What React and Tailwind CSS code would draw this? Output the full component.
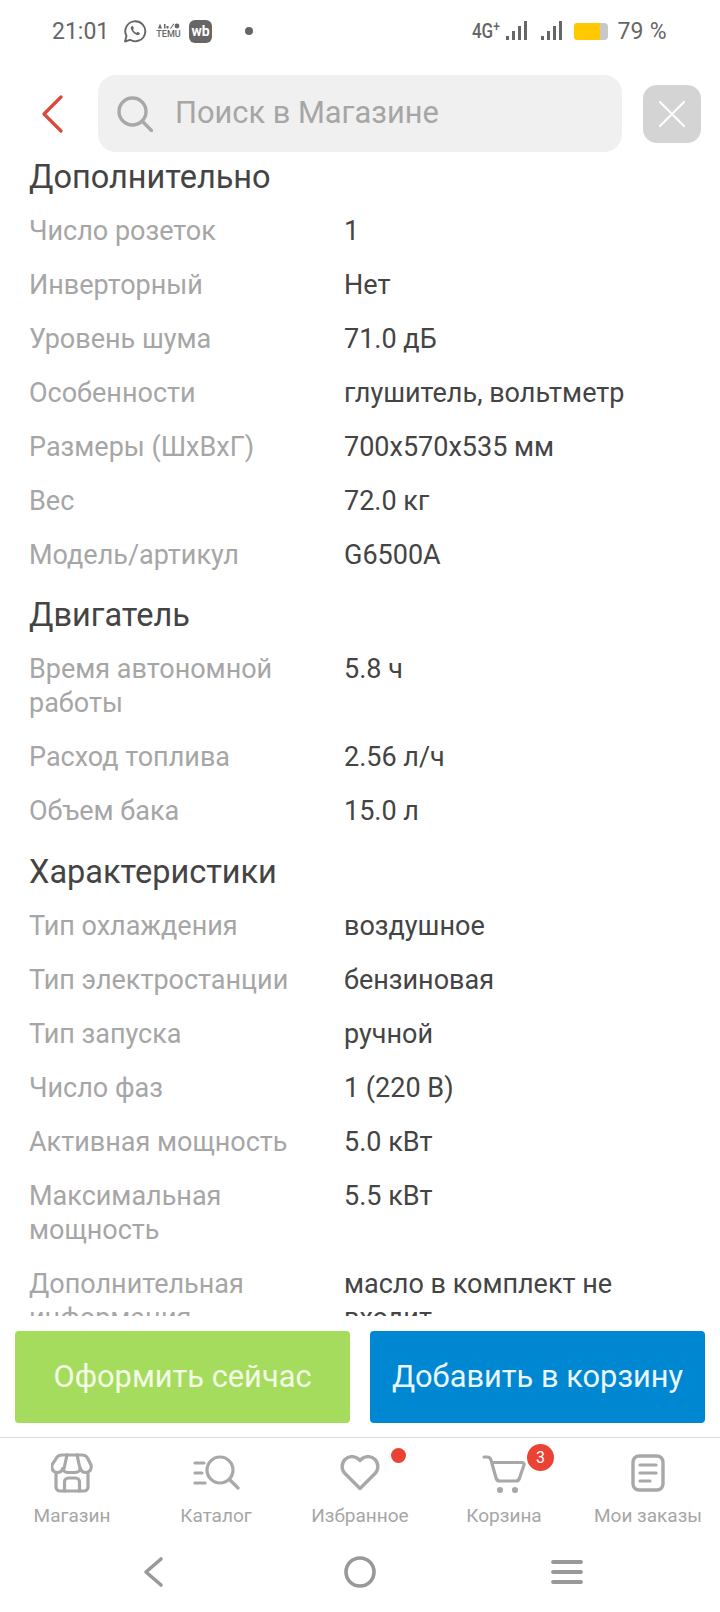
import React from "react";

const sections = [
  {
    title: "Дополнительно",
    gap: "pt-[7px]",
    rows: [
      ["Число розеток", "1"],
      ["Инверторный", "Нет"],
      ["Уровень шума", "71.0 дБ"],
      ["Особенности", "глушитель, вольтметр"],
      ["Размеры (ШхВхГ)", "700x570x535 мм"],
      ["Вес", "72.0 кг"],
      ["Модель/артикул", "G6500A"],
    ],
  },
  {
    title: "Двигатель",
    gap: "pt-[6px]",
    rows: [
      ["Время автономной работы", "5.8 ч"],
      ["Расход топлива", "2.56 л/ч"],
      ["Объем бака", "15.0 л"],
    ],
  },
  {
    title: "Характеристики",
    gap: "pt-[7px]",
    rows: [
      ["Тип охлаждения", "воздушное"],
      ["Тип электростанции", "бензиновая"],
      ["Тип запуска", "ручной"],
      ["Число фаз", "1 (220 В)"],
      ["Активная мощность", "5.0 кВт"],
      ["Максимальная мощность", "5.5 кВт"],
      ["Дополнительная информация", "масло в комплект не входит"],
    ],
  },
];

const Signal = () => (
  <svg width="22" height="20" viewBox="0 0 22 20" fill="#666">
    <rect x="0" y="15" width="3" height="4" />
    <rect x="6" y="10" width="3" height="9" />
    <rect x="12" y="5" width="3" height="14" />
    <rect x="18" y="0" width="3" height="19" />
  </svg>
);

const StatusBar = () => (
  <div className="flex h-[60px] shrink-0 items-center pt-[2px] text-[#666]">
    <span className="ml-[52px] w-[66px] text-[23px] leading-none">21:01</span>
    <svg className="ml-[5px]" width="24" height="24" viewBox="0 0 24 24" fill="none">
      <path d="M2 22.5l1.5-5.4A10 10 0 1 1 7 20.8L2 22.5z" stroke="#666" strokeWidth="1.9" strokeLinejoin="round" />
      <path d="M8.8 7.2c-.9.6-1.2 1.7-.7 3 .9 2.5 3.2 4.8 5.7 5.7 1.3.4 2.4.1 3-.8.3-.5.2-.9-.2-1.2l-1.6-.9c-.4-.2-.7-.1-1 .2l-.6.7c-1.4-.5-2.8-1.9-3.4-3.4l.6-.6c.3-.3.3-.6.2-1l-.8-1.6c-.3-.4-.7-.4-1.2-.1z" fill="#666" />
    </svg>
    <div className="ml-[10px] flex w-[23px] flex-col items-center">
      <svg width="23" height="6" viewBox="0 0 23 6" fill="#666">
        <path d="M1 5.5L3 .5l2 5z" />
        <rect x="7" y="1" width="1.5" height="4.5" />
        <rect x="9.5" y="3" width="2" height="2.5" />
        <path d="M13 5.5l3.5-5 .8.5-3.5 5z" />
        <circle cx="20" cy="3" r="2.4" />
      </svg>
      <span className="mt-[1px] text-[9px] font-medium leading-[9px]">TEMU</span>
    </div>
    <div className="ml-[9px] flex h-[23px] w-[23px] items-center justify-center rounded-[6px] bg-[#666] text-[14px] font-bold leading-none text-white">
      wb
    </div>
    <div className="ml-[33px] h-[8px] w-[8px] rounded-full bg-[#666]" />
    <div className="ml-auto flex items-center">
      <span className="origin-right scale-x-[0.85] whitespace-nowrap text-[20px] font-medium leading-none text-[#666]">
        4G<sup className="text-[14px]">+</sup>
      </span>
      <div className="ml-[7px]"><Signal /></div>
      <div className="ml-[13px]"><Signal /></div>
      <div className="ml-[11px] flex items-center">
        <div className="h-[17px] w-[26px] rounded-l-[3px] bg-[#ffc800]" />
        <div className="h-[17px] w-[8px] rounded-r-[4px] bg-[#c8c8c8]" />
      </div>
      <span className="ml-[9px] mr-[53px] text-[23px] leading-none tracking-[0.3px]">79 %</span>
    </div>
  </div>
);

const Header = () => (
  <div className="flex h-[92px] shrink-0 items-start pt-[15px]">
    <div className="flex h-[77px] w-[98px] items-center pl-[41px]">
      <svg width="22" height="38" viewBox="0 0 22 38" fill="none">
        <path d="M20 2L3 19l17 17" stroke="#d9493c" strokeWidth="3.2" strokeLinecap="round" strokeLinejoin="round" />
      </svg>
    </div>
    <div className="flex h-[77px] w-[524px] items-center rounded-[18px] bg-[#f0f0f0] pl-[19px]">
      <svg width="36" height="36" viewBox="0 0 36 36" fill="none">
        <circle cx="15.5" cy="15.5" r="13.5" stroke="#a8a8a8" strokeWidth="3.4" />
        <path d="M25 25l9.5 9.5" stroke="#a8a8a8" strokeWidth="3.4" strokeLinecap="round" />
      </svg>
      <span className="ml-[22px] text-[30.8px] leading-none text-[#a6a6a6]">Поиск в Магазине</span>
    </div>
    <div className="ml-[21px] mt-[10px] flex h-[58px] w-[58px] items-center justify-center rounded-[14px] bg-[#d4d4d4]">
      <svg width="28" height="28" viewBox="0 0 28 28" fill="none">
        <path d="M2 2l24 24M26 2L2 26" stroke="#fff" strokeWidth="2.2" strokeLinecap="round" />
      </svg>
    </div>
  </div>
);

const Specs = () => (
  <div className="min-h-0 flex-1 overflow-hidden px-[29px]">
    <div className="-mt-[9px]">
      {sections.map((section) => (
        <section key={section.title} className={section.gap}>
          <h2 className="flex h-[54px] items-center text-[32.5px] font-normal leading-none text-[#444]">
            {section.title}
          </h2>
          {section.rows.map(([label, value]) => (
            <div key={label} className="flex py-[10px] text-[27px] leading-[34px]">
              <div className="w-[315px] shrink-0 pr-[20px] text-[#a6a6a6]">{label}</div>
              <div className="w-[340px] text-[#444]">{value}</div>
            </div>
          ))}
        </section>
      ))}
    </div>
  </div>
);

const Actions = () => (
  <div className="flex h-[122px] shrink-0 gap-[20px] border-b border-[#dcdcdc] px-[15px] pt-[15px]">
    <button className="h-[92px] flex-1 rounded-[4px] bg-[#a5dc5e] text-[30.8px] text-[#f3fbe6]">Оформить сейчас</button>
    <button className="h-[92px] flex-1 rounded-[4px] bg-[#0087d1] text-[30.8px] text-[#eaf6fd]">Добавить в корзину</button>
  </div>
);

const tabs = [
  {
    label: "Магазин",
    icon: (
      <svg width="42" height="40" viewBox="0 0 42 40" fill="none" stroke="#a8a8a8" strokeWidth="3.2" strokeLinejoin="round" strokeLinecap="round">
        <path d="M5 21v13a4 4 0 0 0 4 4h24a4 4 0 0 0 4-4V21" />
        <path d="M11 2h20c3 0 4.500 1 5.500 3l3.500 7c1 4-1.500 7.500-5 7.500-2.500 0-5-1.500-5.500-4-.5 2.500-3.500 4-5.500 4h-7c-2 0-5-1.500-5.500-4-.5 2.500-3 4-5.500 4-3.500 0-6-3.500-5-7.500L5.500 5C6.500 3 8 2 11 2z" />
        <path d="M16 2l-3 13.500M26 2l3 13.500" />
        <path d="M13.500 38V29a4 4 0 0 1 4-4h7a4 4 0 0 1 4 4v9" />
      </svg>
    ),
  },
  {
    label: "Каталог",
    icon: (
      <svg width="48" height="38" viewBox="0 0 48 38" fill="none" stroke="#a8a8a8" strokeLinecap="round">
        <circle cx="28" cy="16" r="13" strokeWidth="3.2" />
        <path d="M38 26l8 8" strokeWidth="3.2" />
        <path d="M3 9h9M3 19h7M3 29h10" strokeWidth="3.2" />
      </svg>
    ),
  },
  {
    label: "Избранное",
    icon: (
      <svg width="40" height="36" viewBox="0 0 40 36" fill="none">
        <path d="M20 33.5L5 18.5a10 10 0 0 1 0-14 10 10 0 0 1 14 0l1 1 1-1a10 10 0 0 1 14 0 10 10 0 0 1 0 14L20 33.5z" stroke="#a8a8a8" strokeWidth="3.4" strokeLinejoin="round" />
      </svg>
    ),
    badge: <div className="absolute left-[51px] -top-[5px] h-[15px] w-[15px] rounded-full bg-[#ea4335]" />,
  },
  {
    label: "Корзина",
    icon: (
      <svg width="44" height="40" viewBox="0 0 44 40" fill="none" stroke="#a8a8a8" strokeWidth="3.2" strokeLinecap="round" strokeLinejoin="round">
        <path d="M2 4h3c2 0 3.500 1 4 3L14 25c.5 2 2 3 4 3h16c2 0 3-1 3.500-3L42 12c.4-1.500-.5-2.500-2-2.500H10" />
        <circle cx="18" cy="37" r="1.500" fill="#a8a8a8" />
        <circle cx="33" cy="37" r="1.500" fill="#a8a8a8" />
      </svg>
    ),
    badge: (
      <div className="absolute left-[45px] -top-[9px] flex h-[27px] w-[27px] items-center justify-center rounded-full bg-[#ea4335] text-[16px] leading-none text-white">
        3
      </div>
    ),
  },
  {
    label: "Мои заказы",
    icon: (
      <svg width="36" height="40" viewBox="0 0 36 40" fill="none" stroke="#a8a8a8" strokeLinecap="round">
        <rect x="3" y="3" width="30" height="34" rx="6" strokeWidth="3.4" />
        <path d="M10 12h16M10 20h16M10 28h10" strokeWidth="3.2" />
      </svg>
    ),
  },
];

const TabBar = () => (
  <div className="grid h-[102px] shrink-0 grid-cols-5">
    {tabs.map((tab) => (
      <div key={tab.label} className="flex flex-col items-center pt-[15px]">
        <div className="relative flex h-[40px] items-center justify-center">
          {tab.icon}
          {tab.badge}
        </div>
        <span className="mt-[11px] whitespace-nowrap text-[19px] leading-[24px] text-[#a6a6a6]">{tab.label}</span>
      </div>
    ))}
  </div>
);

const NavBar = () => (
  <div className="flex h-[72px] shrink-0 items-start justify-center pt-[12px]">
    <div className="flex h-[40px] items-center gap-[167px]">
      <div className="flex w-[40px] justify-center">
        <svg width="22" height="32" viewBox="0 0 22 32" fill="none">
          <path d="M19 3L4 16l15 13" stroke="#999" strokeWidth="3.6" strokeLinecap="round" strokeLinejoin="round" />
        </svg>
      </div>
      <div className="flex w-[40px] justify-center">
        <svg width="32" height="32" viewBox="0 0 32 32" fill="none">
          <circle cx="16" cy="16" r="14" stroke="#999" strokeWidth="3.6" />
        </svg>
      </div>
      <div className="flex w-[40px] justify-center">
        <svg width="34" height="26" viewBox="0 0 34 26" fill="none">
          <path d="M3 3h28M3 13h28M3 23h28" stroke="#999" strokeWidth="3.8" strokeLinecap="round" />
        </svg>
      </div>
    </div>
  </div>
);

const App = () => {
  return (
    <div className="flex h-[1612px] w-[720px] flex-col overflow-hidden bg-white font-['Roboto',sans-serif]">
      <StatusBar />
      <Header />
      <Specs />
      <Actions />
      <TabBar />
      <NavBar />
    </div>
  );
};

export default App;
